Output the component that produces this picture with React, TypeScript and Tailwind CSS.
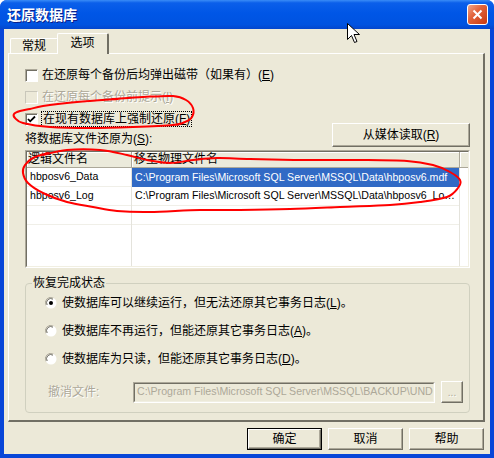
import React from "react";

const ui = "font-['Liberation_Sans','Noto_Sans_CJK_SC',sans-serif]";
const raised =
  "border border-t-white border-l-white border-r-[#716f64] border-b-[#716f64] shadow-[inset_-1px_-1px_0_#aca899]";
const disabledText = "text-[#aca899] [text-shadow:1px_1px_0_#ffffff]";

type Pt = [number, number];

// catmull-rom -> bezier, for the hand drawn marks
const toPath = (p: Pt[]) => {
  let d = `M${p[0][0]} ${p[0][1]}`;
  for (let i = 0; i < p.length - 1; i++) {
    const p0 = p[i - 1] || p[i];
    const p1 = p[i];
    const p2 = p[i + 1];
    const p3 = p[i + 2] || p2;
    const c1 = [p1[0] + (p2[0] - p0[0]) / 6, p1[1] + (p2[1] - p0[1]) / 6];
    const c2 = [p2[0] - (p3[0] - p1[0]) / 6, p2[1] - (p3[1] - p1[1]) / 6];
    d += ` C${c1[0].toFixed(1)} ${c1[1].toFixed(1)} ${c2[0].toFixed(1)} ${c2[1].toFixed(1)} ${p2[0]} ${p2[1]}`;
  }
  return d;
};

const loopOne: Pt[] = [
  [112, 99], [143, 97], [173, 96], [186, 100], [193, 108], [192, 117], [185, 122],
  [173, 125], [133, 127], [90, 128], [50, 127], [23, 123], [15, 118], [14, 114],
  [20, 111], [30, 109], [43, 106], [77, 102], [118, 99],
];

const loopTwo: Pt[] = [
  [43, 155], [67, 150], [100, 150], [127, 155], [147, 160], [170, 163], [193, 160],
  [217, 158], [250, 159], [300, 160], [357, 160], [407, 161], [433, 165], [450, 172],
  [460, 180], [458, 188], [447, 197], [420, 202], [390, 205], [340, 207], [290, 209],
  [240, 210], [200, 210], [150, 212], [117, 211], [93, 207], [67, 202], [43, 193],
  [28, 183], [23, 173], [25, 165], [33, 158], [48, 153],
];

function Checkbox({ checked, disabled }: { checked?: boolean; disabled?: boolean }) {
  return (
    <span
      className={
        disabled
          ? "w-[13px] h-[13px] shrink-0 flex items-center justify-center border border-t-[#c9c7ba] border-l-[#c9c7ba] border-r-white border-b-white bg-[#ece9d8]"
          : "w-[13px] h-[13px] shrink-0 flex items-center justify-center border border-t-[#aca899] border-l-[#aca899] border-r-white border-b-white bg-white shadow-[inset_1px_1px_0_#716f64]"
      }
    >
      {checked && (
        <svg width="9" height="9" viewBox="0 0 9 9">
          <path d="M1 4 L3.2 6.3 L8 1.5" fill="none" stroke="#000" strokeWidth="1.8" />
        </svg>
      )}
    </span>
  );
}

function Radio({ checked }: { checked?: boolean }) {
  return (
    <svg width="12" height="12" viewBox="0 0 12 12" className="shrink-0">
      <circle cx="6" cy="6" r="5.5" fill="#ffffff" />
      <path d="M1.2 8.5 A5.3 5.3 0 0 1 8.5 1.2" fill="none" stroke="#aca899" strokeWidth="1" />
      <path d="M2.2 8 A4.2 4.2 0 0 1 8 2.2" fill="none" stroke="#716f64" strokeWidth="1" />
      <path d="M8.5 1.2 A5.3 5.3 0 0 1 1.2 8.5" fill="none" stroke="#ffffff" strokeWidth="1" />
      {checked && <circle cx="6" cy="6" r="2" fill="#000" />}
    </svg>
  );
}

function Btn({ label, def }: { label: string; def?: boolean }) {
  if (def) {
    return (
      <div className="w-[75px] h-[22px] border border-black flex">
        <div className={`flex-1 flex items-center justify-center text-[12px] ${raised}`}>{label}</div>
      </div>
    );
  }
  return (
    <div className={`w-[75px] h-[22px] flex items-center justify-center text-[12px] ${raised}`}>
      {label}
    </div>
  );
}

export default function App() {
  return (
    <div className={`relative w-[494px] h-[458px] bg-[#0846d8] rounded-t-[7px] overflow-hidden ${ui} text-black`}>
      {/* title bar */}
      <div className="h-[29px] flex items-center justify-between pl-[7px] pr-[6px] bg-[linear-gradient(to_bottom,#3a8cf7_0%,#0b5fea_10%,#0056e6_45%,#0053e0_85%,#0446cc_100%)]">
        <span className="text-[14px] leading-[16px] font-bold text-white [text-shadow:1px_1px_0_#0a1f8a]">
          还原数据库
        </span>
        <div className="w-[21px] h-[21px] rounded-[3px] border border-white bg-[linear-gradient(135deg,#f0a68a_0%,#e2643c_40%,#c8390f_100%)] flex items-center justify-center">
          <svg width="11" height="11" viewBox="0 0 11 11">
            <path d="M1.5 1.5 L9.5 9.5 M9.5 1.5 L1.5 9.5" stroke="#ffffff" strokeWidth="2" />
          </svg>
        </div>
      </div>

      {/* dialog body */}
      <div className="mx-[4px] h-[425px] bg-[#ece9d8] flex flex-col">
        {/* tabs */}
        <div className="h-[24px] flex items-end pl-[6px] text-[12px]">
          <div className="w-[48px] h-[15px] border-t border-l border-t-white border-l-white border-r border-r-[#aca899] rounded-t-[2px] flex items-center justify-center">
            常规
          </div>
          <div className="relative z-10 -ml-[1px] -mb-[1px] w-[52px] h-[21px] bg-[#ece9d8] border-t border-l border-t-white border-l-white border-r-2 border-r-[#716f64] rounded-t-[2px] flex items-center justify-center pb-[2px]">
            选项
          </div>
        </div>

        {/* tab page */}
        <div className="ml-[4px] w-[477px] h-[369px] border-t border-l border-t-white border-l-white border-r-2 border-b-2 border-r-[#716f64] border-b-[#716f64] pl-[16px] pr-[13px] pt-[13px] flex flex-col text-[12px]">
          <div className="h-[16px] flex items-center gap-[4px] leading-[16px]">
            <Checkbox />
            <span>
              在还原每个备份后均弹出磁带（如果有）(<u>E</u>)
            </span>
          </div>
          <div className="mt-[6px] h-[16px] flex items-center gap-[4px] leading-[16px]">
            <Checkbox disabled />
            <span className={disabledText}>
              在还原每个备份前提示(<u>I</u>)
            </span>
          </div>
          <div className="flex items-end justify-between">
            <div className="flex flex-col">
              <div className="mt-[6px] h-[16px] flex items-center gap-[4px] leading-[16px]">
                <Checkbox checked />
                <span className="outline outline-1 outline-dotted outline-black px-[1px] leading-[14px]">
                  在现有数据库上强制还原(<u>F</u>)
                </span>
              </div>
              <div className="mt-[5px] h-[15px] leading-[15px]">
                将数据库文件还原为(<u>S</u>):
              </div>
            </div>
            <div className={`w-[138px] h-[24px] flex items-center justify-center ${raised}`}>
              从媒体读取(<u>R</u>)
            </div>
          </div>

          {/* file list */}
          <div className="mt-[3px] h-[118px] border border-t-[#aca899] border-l-[#aca899] border-r-white border-b-white">
            <div className="h-full border border-t-[#716f64] border-l-[#716f64] border-r-[#f1efe2] border-b-[#f1efe2] bg-white flex flex-col overflow-hidden">
              <div className="h-[16px] shrink-0 flex bg-[#ebeadb] border-b border-b-[#aca899] leading-[15px]">
                <div className="w-[105px] pl-[1px] border-r border-r-[#aca899] shadow-[inset_1px_1px_0_#ffffff]">
                  逻辑文件名
                </div>
                <div className="w-[328px] pl-[2px] border-r border-r-[#aca899] shadow-[inset_1px_1px_0_#ffffff]">
                  移至物理文件名
                </div>
                <div className="flex-1 shadow-[inset_1px_1px_0_#ffffff]" />
              </div>
              <div className="flex-1 flex text-[10.6px]">
                <div className="w-[105px] border-r border-r-[#e4e3dc] flex flex-col">
                  <div className="h-[19px] pl-[3px] flex items-center border-b border-b-[#f0efe8]">hbposv6_Data</div>
                  <div className="h-[19px] pl-[3px] flex items-center border-b border-b-[#f0efe8]">hbposv6_Log</div>
                  <div className="h-[19px] border-b border-b-[#f0efe8]" />
                </div>
                <div className="w-[328px] border-r border-r-[#e4e3dc] flex flex-col">
                  <div className="h-[19px] pl-[3px] flex items-center bg-[#316ac5] text-white whitespace-nowrap overflow-hidden">
                    C:\Program Files\Microsoft SQL Server\MSSQL\Data\hbposv6.mdf
                  </div>
                  <div className="h-[19px] pl-[3px] pr-[4px] flex items-center border-b border-b-[#f0efe8] whitespace-nowrap overflow-hidden">
                    <span className="truncate">C:\Program Files\Microsoft SQL Server\MSSQL\Data\hbposv6_Log.ldf</span>
                  </div>
                  <div className="h-[19px] border-b border-b-[#f0efe8]" />
                </div>
                <div className="flex-1" />
              </div>
            </div>
          </div>

          {/* recovery state */}
          <fieldset className="mt-[8px] border border-[#d0d0bf] rounded-[4px]">
            <legend className="ml-[6px] px-[1px] leading-[14px]">恢复完成状态</legend>
            <div className="pl-[19px] pb-[9px] flex flex-col">
              <div className="mt-[5px] h-[16px] flex items-center gap-[5px]">
                <Radio checked />
                <span>
                  使数据库可以继续运行，但无法还原其它事务日志(<u>L</u>)。
                </span>
              </div>
              <div className="mt-[12px] h-[16px] flex items-center gap-[5px]">
                <Radio />
                <span>
                  使数据库不再运行，但能还原其它事务日志(<u>A</u>)。
                </span>
              </div>
              <div className="mt-[12px] h-[16px] flex items-center gap-[5px]">
                <Radio />
                <span>
                  使数据库为只读，但能还原其它事务日志(<u>D</u>)。
                </span>
              </div>
              <div className="mt-[14px] h-[22px] flex items-center">
                <span className={`ml-[3px] w-[85px] ${disabledText}`}>撤消文件:</span>
                <div className="w-[302px] h-[21px] border border-t-[#aca899] border-l-[#aca899] border-r-white border-b-white">
                  <div className="h-full border border-t-[#716f64] border-l-[#716f64] border-r-[#f1efe2] border-b-[#f1efe2] pl-[2px] flex items-center overflow-hidden">
                    <span className="block w-full overflow-hidden whitespace-nowrap text-[10.6px] text-[#aca899]">
                      C:\Program Files\Microsoft SQL Server\MSSQL\BACKUP\UNDO_hbposv6.DAT
                    </span>
                  </div>
                </div>
                <div className={`ml-[6px] w-[22px] h-[22px] flex items-center justify-center text-[10px] ${disabledText} ${raised}`}>
                  ...
                </div>
              </div>
            </div>
          </fieldset>
        </div>

        {/* dialog buttons */}
        <div className="mt-[6px] pr-[6px] flex justify-end gap-[6px]">
          <Btn label="确定" def />
          <Btn label="取消" />
          <Btn label="帮助" />
        </div>
      </div>

      {/* red pen marks and mouse pointer over the screenshot */}
      <svg className="absolute inset-0 pointer-events-none" width="494" height="458" viewBox="0 0 494 458">
        <path d={toPath(loopOne)} fill="none" stroke="#ff0000" strokeWidth="2" strokeLinecap="round" />
        <path d={toPath(loopTwo)} fill="none" stroke="#ff0000" strokeWidth="2" strokeLinecap="round" />
        <path
          d="M347.5 23.5 L347.5 39.5 L351.5 35.5 L354.5 42.5 L357 41.5 L354 34.5 L359.5 34.5 Z"
          fill="#ffffff"
          stroke="#000000"
          strokeWidth="1"
        />
      </svg>
    </div>
  );
}
